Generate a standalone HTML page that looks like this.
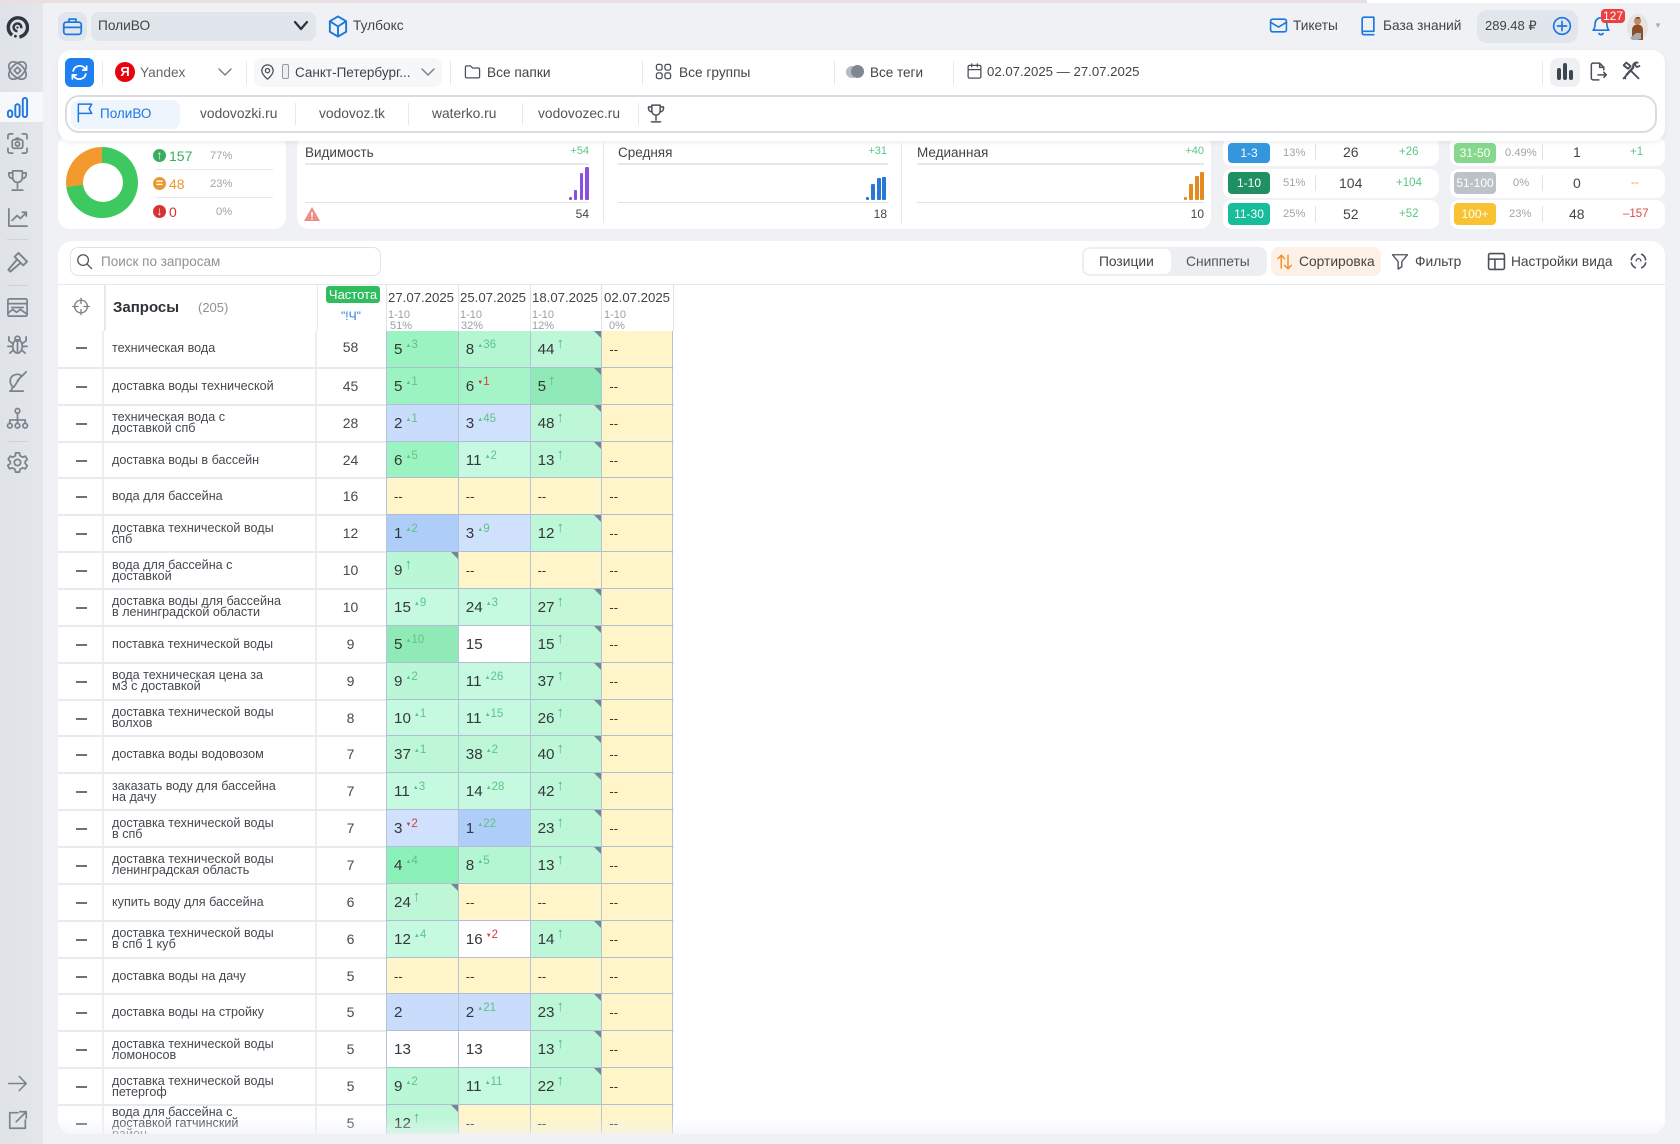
<!DOCTYPE html>
<html lang="ru"><head><meta charset="utf-8"><title>ПолиВО</title>
<style>
*{box-sizing:border-box}
html,body{margin:0;padding:0}
body{width:1680px;height:1144px;position:relative;overflow:hidden;background:#eff1f4;font-family:"Liberation Sans","Noto Sans CJK SC",sans-serif;color:#3c4248}
.a,.t,svg.i{position:absolute}
.t{white-space:nowrap;line-height:1}
svg.i{fill:none;stroke:#7a828c;stroke-width:1.8;stroke-linecap:round;stroke-linejoin:round}
svg.b{stroke:#1c78e0}
svg.d{stroke:#4a5058}
.v{position:absolute;width:1px;background:#e6e9ec}
.card{position:absolute;background:#fff}
.sc{position:absolute;background:#fff;border-radius:9px;height:29px}
.bd{position:absolute;width:42px;border-radius:4px;color:#fff;font-size:12px;text-align:center}
#tb{position:absolute;left:0;top:-1px;width:616px}
.r{height:36.86px;display:flex;position:relative;border-top:2px solid #e8ebee;background:#fff}
.r:first-child{border-top:0}
.x{width:46px;border-right:2px solid #eceef1;position:relative}
.x:after{content:"";position:absolute;left:18px;top:17px;width:11px;height:2px;background:#6b7178}
.q{width:213px;border-right:2px solid #eceef1;padding-left:8px;font-size:12.6px;line-height:11px;color:#444a50;display:flex;align-items:center;overflow:hidden;white-space:nowrap}
.n{width:69px;text-align:center;font-size:14px;color:#444a50;line-height:35px;padding-right:2px}
.c{width:71.8px;flex:none;position:relative;border-left:1px solid #b4c4d8;font-size:15.2px;line-height:38px;padding-left:7px;color:#33383d;margin-top:-2px;border-top:1px solid #aebfd4;height:36.86px;white-space:nowrap}
.r:first-child .c{margin-top:0}
.c:last-child{border-right:1px solid #b4c4d8}
.c sup{font-size:11.5px;position:relative;top:-6px;vertical-align:baseline;line-height:0;color:#5cc585;margin-left:3px}
.c sup b{font-size:6px;font-weight:400;position:relative;top:-1px}
.c sup.m{color:#d83a3a}
.c i{font-style:normal;font-size:15px;position:relative;top:-6px;line-height:0;color:#4cc07a;margin-left:2px}
.k:after{content:"";position:absolute;right:0;top:0;border-style:solid;border-width:0 7px 7px 0;border-color:transparent #6f8a96 transparent transparent}
.y{background:#fff5c9;font-size:13px}
.w{background:#fff}
.b1{background:#aecdf9}.b2{background:#c9dcfb}.b3{background:#cfe1fc}
.g4{background:#8cf1b9}.g5{background:#9af3c0}.gs{background:#90eab8}.g6{background:#a4f4c7}.g8{background:#b4f6d2}.g9{background:#baf7d6}.g1{background:#c5fae0}.g2{background:#bdf7d8}
</style></head><body>

<!-- top strip -->
<div class="a" style="left:0;top:0;width:1367px;height:3px;background:#e9dfe0"></div>
<div class="a" style="left:1367px;top:0;width:313px;height:3px;background:#fff"></div>

<!-- sidebar -->
<div class="a" style="left:0;top:3px;width:43px;height:1141px;background:linear-gradient(90deg,#dfe3e8,#e3e6ea)"></div>
<div class="a" style="left:0;top:92px;width:43px;height:30px;background:#f6f8fa"></div>
<div class="a" style="left:7px;top:239px;width:21px;height:1px;background:#cdd2d8"></div>
<div class="a" style="left:7px;top:285px;width:21px;height:1px;background:#cdd2d8"></div>
<div class="a" style="left:7px;top:441px;width:21px;height:1px;background:#cdd2d8"></div>

<svg class="i" style="left:6px;top:16px;stroke:#2f3740;stroke-width:3.6;stroke-linecap:butt" width="23" height="23" viewBox="0 0 24 24"><path d="M6.500 20A10 10 0 1 1 14 21.800"/><path d="M12 15.800a4 4 0 1 1 3.800-3" stroke-width="2.600"/><circle cx="9.800" cy="21" r="1.500" fill="#2f3740" stroke="none"/><circle cx="12" cy="12" r="1.200" fill="#2f3740" stroke="none"/></svg>
<svg class="i" style="left:6px;top:59px" width="23" height="23" viewBox="0 0 24 24"><ellipse cx="12" cy="12" rx="11" ry="6.500" transform="rotate(45 12 12)"/><ellipse cx="12" cy="12" rx="11" ry="6.500" transform="rotate(-45 12 12)"/><path d="M12 8.500l3.500 3.500-3.500 3.500L8.500 12z"/></svg>
<svg class="i b" style="left:6px;top:96px;stroke-width:2" width="23" height="23" viewBox="0 0 24 24"><rect x="2" y="15" width="4.500" height="7" rx="2.200"/><rect x="9.700" y="8.500" width="4.500" height="13.500" rx="2.200"/><rect x="17.500" y="2" width="4.500" height="20" rx="2.200"/></svg>
<svg class="i" style="left:6px;top:132px" width="23" height="23" viewBox="0 0 24 24"><path d="M2 7V4a2 2 0 0 1 2-2h3M17 2h3a2 2 0 0 1 2 2v3M2 17v3a2 2 0 0 0 2 2h3M17 22h3a2 2 0 0 0 2-2v-3"/><rect x="6.500" y="8" width="11" height="9" rx="2"/><circle cx="12" cy="12.500" r="2.200"/><path d="M10 8l.8-1.500h2.400L14 8"/></svg>
<svg class="i" style="left:6px;top:169px" width="23" height="23" viewBox="0 0 24 24"><path d="M7 2h10v7a5 5 0 0 1-10 0zM7 4H3v2a4 4 0 0 0 4 4M17 4h4v2a4 4 0 0 1-4 4M12 14v6M6.500 22h11"/></svg>
<svg class="i" style="left:6px;top:206px" width="23" height="23" viewBox="0 0 24 24"><path d="M3 3v18h19M6.500 15l5-5 3.500 3 6-6M17 6.500h4.200v4"/></svg>
<svg class="i" style="left:6px;top:251px;stroke-width:2" width="23" height="23" viewBox="0 0 24 24"><path d="M13 2l9 9-4 4-9-9zM11 9.500L2.500 19.500l2 2L14.500 13"/></svg>
<svg class="i" style="left:6px;top:296px" width="23" height="23" viewBox="0 0 24 24"><rect x="2" y="3" width="20" height="18" rx="1.500"/><path d="M2 8h20M6 12h12M2 18l5-4 4 3 4-3 7 5"/></svg>
<svg class="i" style="left:6px;top:333px" width="23" height="23" viewBox="0 0 24 24"><ellipse cx="12" cy="14" rx="5" ry="7"/><circle cx="12" cy="6" r="2.600"/><path d="M7 11L3 8V4M17 11l4-3V4M7 14H2M17 14h5M7.500 18L4 21M16.500 18l3.500 3M12 9v12"/></svg>
<svg class="i" style="left:6px;top:370px" width="23" height="23" viewBox="0 0 24 24"><path d="M4 22h14M8 18c-4-2-5-9-1-12 3-2 7-2 9 0zM12 11L21 2M7 18l-2 4"/></svg>
<svg class="i" style="left:6px;top:407px" width="23" height="23" viewBox="0 0 24 24"><circle cx="12" cy="4" r="2.400"/><circle cx="4" cy="19.500" r="2.400"/><circle cx="12" cy="19.500" r="2.400"/><circle cx="20" cy="19.500" r="2.400"/><path d="M12 6.500V17M4 17v-3.500h16V17"/></svg>
<svg class="i" style="left:6px;top:451px" width="23" height="23" viewBox="0 0 24 24"><circle cx="12" cy="12" r="3.300"/><path d="M10 2h4l.7 3 2.600 1.400 2.900-1 2 3.400-2.200 2.200v2l2.200 2.200-2 3.400-2.900-1-2.600 1.400-.7 3h-4l-.7-3-2.600-1.400-2.900 1-2-3.400L4.500 13v-2L2.300 8.800l2-3.400 2.900 1 2.600-1.400z"/></svg>
<svg class="i" style="left:7px;top:1073px" width="21" height="21" viewBox="0 0 24 24"><path d="M2 12h20M14 4l8 8-8 8"/></svg>
<svg class="i" style="left:7px;top:1109px" width="22" height="22" viewBox="0 0 24 24"><path d="M12 4H3v17h17v-9M14 3h7v7M21 3L10 14"/></svg>

<!-- top bar -->
<div class="a" style="left:58px;top:12px;width:29px;height:29px;background:#e1e6ec;border-radius:8px"></div>
<svg class="i b" style="left:62px;top:16px;stroke-width:2" width="21" height="21" viewBox="0 0 24 24"><rect x="2" y="7" width="20" height="14" rx="3"/><path d="M8 7V3.500h8V7M2 13h20"/></svg>
<div class="a" style="left:91px;top:12px;width:225px;height:29px;background:#e1e6ec;border-radius:8px"></div>
<div class="t" style="left:98px;top:19px;font-size:13.700px;color:#444">ПолиВО</div>
<svg class="i" style="left:293px;top:19px;stroke:#2c3238;stroke-width:2.200" width="16" height="14" viewBox="0 0 16 14"><path d="M2 3l6 7 6-7"/></svg>
<svg class="i b" style="left:328px;top:15px;stroke-width:2" width="20" height="23" viewBox="0 0 20 24"><path d="M10 1.500l8.500 5v11L10 22.500l-8.500-5v-11zM1.500 6.500L10 12l8.500-5.500M10 12v10.500"/></svg>
<div class="t" style="left:353px;top:19px;font-size:13.700px;color:#444">Тулбокс</div>

<svg class="i b" style="left:1269px;top:16px;stroke-width:2" width="19" height="19" viewBox="0 0 24 24"><rect x="2" y="4" width="20" height="16" rx="2.500"/><path d="M2 8l10 6 10-6"/></svg>
<div class="t" style="left:1293px;top:19px;font-size:13.700px;color:#444">Тикеты</div>
<svg class="i b" style="left:1358px;top:15px;stroke-width:2" width="20" height="21" viewBox="0 0 24 24"><path d="M5 19V4a2 2 0 0 1 2-2h12v17H7a2 2 0 0 0 0 4h12"/></svg>
<div class="t" style="left:1383px;top:19px;font-size:13.700px;color:#444">База знаний</div>
<div class="a" style="left:1477px;top:10px;width:101px;height:33px;background:#e1e6ec;border-radius:10px"></div>
<div class="t" style="left:1485px;top:19px;font-size:13px;color:#444">289.48 ₽</div>
<svg class="i b" style="left:1552px;top:16px;stroke-width:2" width="20" height="20" viewBox="0 0 24 24"><circle cx="12" cy="12" r="10"/><path d="M12 6.500v11M6.500 12h11"/></svg>
<svg class="i b" style="left:1591px;top:16px;stroke-width:2" width="20" height="20" viewBox="0 0 24 24"><path d="M12 2a7 7 0 0 0-7 7c0 6-2.500 8-2.500 8h19S19 15 19 9a7 7 0 0 0-7-7zM9.500 21a3 3 0 0 0 5 0"/></svg>
<div class="a" style="left:1601px;top:9px;width:24px;height:14px;background:#ec3f3f;border-radius:4px;color:#fff;font-size:12px;line-height:14px;text-align:center">127</div>
<svg class="a" style="left:1627px;top:14px" width="21" height="26" viewBox="0 0 21 26"><ellipse cx="10.500" cy="13" rx="10.500" ry="13" fill="#e6e4e2"/><circle cx="10.500" cy="7" r="3.600" fill="#c48a62"/><path d="M8 4.500c1-2 5-2 5.500 0z" fill="#5a3a24"/><path d="M5 26V16c0-4 3-5.500 5.500-5.500S16 12 16 16v10z" fill="#8b4f2a"/><path d="M3 24l6-5h5v6l-4 1H5z" fill="#a8acb0"/></svg>
<div class="t" style="left:1654px;top:22px;font-size:8px;color:#a9aeb4">▼</div>

<!-- filter card -->
<div class="card" style="left:58px;top:50px;width:1607px;height:91px;border-radius:13px;box-shadow:0 2px 4px rgba(120,130,140,.12);z-index:3">
<div class="a" style="left:7px;top:8px;width:29px;height:29px;background:#1e80f0;border-radius:6px"></div>
<svg class="i" style="left:12px;top:13px;stroke:#fff;stroke-width:2.200" width="19" height="19" viewBox="0 0 24 24"><path d="M4 10a8.500 8.500 0 0 1 15-3l2 2M21 4v5h-5M20 14a8.500 8.500 0 0 1-15 3l-2-2M3 20v-5h5"/></svg>
<div class="v" style="left:44px;top:11px;height:24px"></div>
<div class="a" style="left:57px;top:12px;width:20px;height:20px;border-radius:50%;background:#e8000d;color:#fff;font-weight:700;font-size:13px;line-height:20px;text-align:center">Я</div>
<div class="t" style="left:82px;top:16px;font-size:13.700px;color:#666">Yandex</div>
<svg class="i" style="left:160px;top:16px;stroke-width:1.500" width="14" height="12" viewBox="0 0 14 12"><path d="M1 3l6 6 6-6"/></svg>
<div class="v" style="left:188px;top:11px;height:24px"></div>
<div class="a" style="left:196px;top:8px;width:188px;height:29px;background:#f5f7f9;border-radius:8px"></div>
<svg class="i d" style="left:201px;top:13px" width="17" height="18" viewBox="0 0 24 24"><path d="M12 2a8 8 0 0 0-8 8c0 6 8 12 8 12s8-6 8-12a8 8 0 0 0-8-8z"/><circle cx="12" cy="10" r="3"/></svg>
<div class="a" style="left:224px;top:14px;width:7px;height:15px;border:1px solid #999;border-radius:2px;background:#eee"></div>
<div class="t" style="left:237px;top:16px;font-size:13.500px;color:#444">Санкт-Петербург...</div>
<svg class="i" style="left:363px;top:16px;stroke-width:1.500" width="14" height="12" viewBox="0 0 14 12"><path d="M1 3l6 6 6-6"/></svg>
<div class="v" style="left:392px;top:11px;height:24px"></div>
<svg class="i d" style="left:406px;top:13px" width="17" height="17" viewBox="0 0 24 24"><path d="M2 6a2 2 0 0 1 2-2h5l3 3h8a2 2 0 0 1 2 2v10a2 2 0 0 1-2 2H4a2 2 0 0 1-2-2z"/></svg>
<div class="t" style="left:429px;top:16px;font-size:13.700px;color:#444">Все папки</div>
<div class="v" style="left:584px;top:11px;height:24px"></div>
<svg class="i d" style="left:597px;top:13px" width="17" height="17" viewBox="0 0 24 24"><rect x="2" y="2" width="8" height="8" rx="2.500"/><rect x="14" y="2" width="8" height="8" rx="2.500"/><rect x="2" y="14" width="8" height="8" rx="2.500"/><rect x="14" y="14" width="8" height="8" rx="2.500"/></svg>
<div class="t" style="left:621px;top:16px;font-size:13.700px;color:#444">Все группы</div>
<div class="v" style="left:776px;top:11px;height:24px"></div>
<div class="a" style="left:788px;top:16px;width:12px;height:12px;border-radius:50%;background:#b6bcc4"></div>
<div class="a" style="left:793px;top:15px;width:13px;height:13px;border-radius:50%;background:#7e8792"></div>
<div class="t" style="left:812px;top:16px;font-size:13.500px;color:#444">Все теги</div>
<div class="v" style="left:895px;top:11px;height:24px"></div>
<svg class="i d" style="left:908px;top:12px" width="17" height="18" viewBox="0 0 24 24"><rect x="3" y="4" width="18" height="18" rx="2"/><path d="M3 10h18M8 2v4M16 2v4"/></svg>
<div class="t" style="left:929px;top:15px;font-size:13.200px;color:#444">02.07.2025 — 27.07.2025</div>
<div class="v" style="left:1484px;top:11px;height:24px"></div>
<div class="a" style="left:1492px;top:8px;width:30px;height:29px;background:#eef0f3;border-radius:8px"></div>
<div class="a" style="left:1499px;top:18px;width:4px;height:12px;background:#3e4650;border-radius:2px"></div>
<div class="a" style="left:1505px;top:13px;width:4px;height:17px;background:#3e4650;border-radius:2px"></div>
<div class="a" style="left:1511px;top:20px;width:4px;height:10px;background:#3e4650;border-radius:2px"></div>
<svg class="i d" style="left:1530px;top:11px" width="20" height="21" viewBox="0 0 24 24"><path d="M13 22H6a2 2 0 0 1-2-2V4a2 2 0 0 1 2-2h8l5 5v3M14 2v5h5M12 16h10M19 13l3 3-3 3"/></svg>
<svg class="i d" style="left:1563px;top:10px;stroke-width:2.200" width="21" height="21" viewBox="0 0 24 24"><path d="M3 21L14 9M6 3l-3 3 5 4 3-3zM4 20l1 1M19 3a4 4 0 0 0-5 5L6 17M21 7l-3 1-2-2 1-3M12 13l8 8"/></svg>

<!-- tabs -->
<div class="a" style="left:7px;top:45px;width:1592px;height:38px;border:2px solid #d9dde1;border-radius:14px"></div>
<div class="a" style="left:13px;top:50px;width:109px;height:29px;background:#eff5fd;border-radius:8px"></div>
<svg class="i b" style="left:17px;top:52px" width="20" height="21" viewBox="0 0 24 24"><path d="M4 23V2h16l-3 5.500 3 5.500H4"/></svg>
<div class="t" style="left:42px;top:57px;font-size:13.500px;color:#1c78e0">ПолиВО</div>
<div class="t" style="left:142px;top:57px;font-size:13.800px;color:#555">vodovozki.ru</div>
<div class="v" style="left:237px;top:53px;height:22px"></div>
<div class="t" style="left:261px;top:57px;font-size:13.800px;color:#555">vodovoz.tk</div>
<div class="v" style="left:350px;top:53px;height:22px"></div>
<div class="t" style="left:374px;top:57px;font-size:13.800px;color:#555">waterko.ru</div>
<div class="v" style="left:464px;top:53px;height:22px"></div>
<div class="t" style="left:480px;top:57px;font-size:13.800px;color:#555">vodovozec.ru</div>
<div class="v" style="left:580px;top:53px;height:22px"></div>
<svg class="i d" style="left:588px;top:53px" width="20" height="21" viewBox="0 0 24 24"><path d="M7 2h10v7a5 5 0 0 1-10 0zM7 4H3v2a4 4 0 0 0 4 4M17 4h4v2a4 4 0 0 1-4 4M12 14v6M6.500 22h11"/></svg>
</div>

<!-- stat card 1 -->
<div class="card" style="left:58px;top:135px;width:228px;height:94px;border-radius:12px"></div>
<div class="a" style="left:66px;top:147px;width:72px;height:71px;border-radius:50%;background:conic-gradient(#3dc95f 0 73%,#f39a2f 73% 100%)"></div>
<div class="a" style="left:83px;top:163px;width:40px;height:39px;border-radius:50%;background:#fff"></div>
<div class="a" style="left:153px;top:149px;width:13px;height:13px;border-radius:50%;background:#3aae5c;color:#fff;font-size:12px;line-height:13px;text-align:center;font-weight:700">↑</div>
<div class="t" style="left:169px;top:149px;font-size:14px;color:#3aae5c">157</div>
<div class="t" style="left:210px;top:151px;font-size:11.200px;color:#a0a5aa">77%</div>
<div class="a" style="left:156px;top:169px;width:117px;height:1px;background:#e6e8ea"></div>
<div class="a" style="left:153px;top:177px;width:13px;height:13px;border-radius:50%;background:#e89a30;color:#fff;font-size:12px;line-height:12px;text-align:center;font-weight:700">=</div>
<div class="t" style="left:169px;top:177px;font-size:14px;color:#e89a30">48</div>
<div class="t" style="left:210px;top:179px;font-size:11.200px;color:#a0a5aa">23%</div>
<div class="a" style="left:156px;top:197px;width:117px;height:1px;background:#e6e8ea"></div>
<div class="a" style="left:153px;top:205px;width:13px;height:13px;border-radius:50%;background:#d83232;color:#fff;font-size:12px;line-height:13px;text-align:center;font-weight:700">↓</div>
<div class="t" style="left:169px;top:205px;font-size:14px;color:#d83232">0</div>
<div class="t" style="left:216px;top:207px;font-size:11.200px;color:#a0a5aa">0%</div>

<!-- stat card 2 -->
<div class="card" style="left:297px;top:135px;width:914px;height:94px;border-radius:12px"></div>
<div class="t" style="left:305px;top:146px;font-size:13.500px;color:#444">Видимость</div>
<div class="t" style="right:1091px;top:146px;font-size:11px;color:#5cc585">+54</div>
<div class="a" style="left:305px;top:163px;width:284px;height:2px;background:#e6e8ea"></div>
<div class="a" style="left:305px;top:202px;width:284px;height:1px;background:#dfe2e5"></div>
<div class="a" style="left:569px;top:197px;width:3px;height:3px;background:#8a4fe0;border-radius:1px"></div>
<div class="a" style="left:574px;top:190px;width:3px;height:10px;background:#8a4fe0;border-radius:1px"></div>
<div class="a" style="left:580px;top:173px;width:3px;height:27px;background:#8a4fe0;border-radius:1px"></div>
<div class="a" style="left:585px;top:167px;width:4px;height:33px;background:#8a4fe0;border-radius:1px"></div>
<svg class="a" style="left:304px;top:207px" width="16" height="14" viewBox="0 0 16 14"><path d="M8 0l8 14H0z" fill="#ee8d86"/><path d="M8 5v5M8 11v1.500" stroke="#fff" stroke-width="1.500"/></svg>
<div class="t" style="right:1091px;top:208px;font-size:12px;color:#444">54</div>
<div class="v" style="left:603px;top:143px;height:80px"></div>

<div class="t" style="left:618px;top:146px;font-size:13.500px;color:#444">Средняя</div>
<div class="t" style="right:793px;top:146px;font-size:11px;color:#5cc585">+31</div>
<div class="a" style="left:618px;top:163px;width:270px;height:2px;background:#e6e8ea"></div>
<div class="a" style="left:618px;top:202px;width:270px;height:1px;background:#dfe2e5"></div>
<div class="a" style="left:866px;top:197px;width:3px;height:3px;background:#2878d8;border-radius:1px"></div>
<div class="a" style="left:871px;top:184px;width:4px;height:16px;background:#2878d8;border-radius:1px"></div>
<div class="a" style="left:877px;top:178px;width:4px;height:22px;background:#2878d8;border-radius:1px"></div>
<div class="a" style="left:882px;top:177px;width:4px;height:23px;background:#2878d8;border-radius:1px"></div>
<div class="t" style="right:793px;top:208px;font-size:12px;color:#444">18</div>
<div class="v" style="left:901px;top:143px;height:80px"></div>

<div class="t" style="left:917px;top:146px;font-size:13.500px;color:#444">Медианная</div>
<div class="t" style="right:476px;top:146px;font-size:11px;color:#5cc585">+40</div>
<div class="a" style="left:917px;top:163px;width:287px;height:2px;background:#e6e8ea"></div>
<div class="a" style="left:917px;top:202px;width:287px;height:1px;background:#dfe2e5"></div>
<div class="a" style="left:1184px;top:197px;width:3px;height:3px;background:#e58a1f;border-radius:1px"></div>
<div class="a" style="left:1189px;top:184px;width:4px;height:16px;background:#e58a1f;border-radius:1px"></div>
<div class="a" style="left:1195px;top:176px;width:4px;height:24px;background:#e58a1f;border-radius:1px"></div>
<div class="a" style="left:1200px;top:172px;width:4px;height:28px;background:#e58a1f;border-radius:1px"></div>
<div class="t" style="right:476px;top:208px;font-size:12px;color:#444">10</div>

<!-- range cards -->
<div class="sc" style="left:1223px;top:137px;width:216px"></div>
<div class="sc" style="left:1223px;top:169px;width:216px"></div>
<div class="sc" style="left:1223px;top:200px;width:216px"></div>
<div class="sc" style="left:1450px;top:137px;width:215px"></div>
<div class="sc" style="left:1450px;top:169px;width:215px"></div>
<div class="sc" style="left:1450px;top:200px;width:215px"></div>

<div class="bd" style="left:1228px;top:143px;height:20px;line-height:20px;background:#3497dd">1-3</div>
<div class="bd" style="left:1228px;top:172px;height:22px;line-height:22px;background:#1f8f64">1-10</div>
<div class="bd" style="left:1228px;top:203px;height:22px;line-height:22px;background:#17bd9b">11-30</div>
<div class="bd" style="left:1454px;top:143px;height:20px;line-height:20px;background:#86d88c">31-50</div>
<div class="bd" style="left:1454px;top:172px;height:22px;line-height:22px;background:#bcc3c6">51-100</div>
<div class="bd" style="left:1454px;top:203px;height:22px;line-height:22px;background:#f9c232">100+</div>

<div class="t" style="left:1283px;top:148px;font-size:11.200px;color:#a0a5aa">13%</div>
<div class="t" style="left:1283px;top:178px;font-size:11.200px;color:#a0a5aa">51%</div>
<div class="t" style="left:1283px;top:209px;font-size:11.200px;color:#a0a5aa">25%</div>
<div class="v" style="left:1315px;top:144px;height:16px;background:#dfe2e5"></div>
<div class="v" style="left:1315px;top:175px;height:16px;background:#dfe2e5"></div>
<div class="v" style="left:1315px;top:206px;height:16px;background:#dfe2e5"></div>
<div class="t" style="left:1343px;top:145px;font-size:14px;color:#444">26</div>
<div class="t" style="left:1339px;top:176px;font-size:14px;color:#444">104</div>
<div class="t" style="left:1343px;top:207px;font-size:14px;color:#444">52</div>
<div class="t" style="left:1399px;top:147px;font-size:11.500px;color:#5cc585">+26</div>
<div class="t" style="left:1396px;top:178px;font-size:11.500px;color:#5cc585">+104</div>
<div class="t" style="left:1399px;top:209px;font-size:11.500px;color:#5cc585">+52</div>

<div class="t" style="left:1505px;top:148px;font-size:11.200px;color:#a0a5aa">0.49%</div>
<div class="t" style="left:1513px;top:178px;font-size:11.200px;color:#a0a5aa">0%</div>
<div class="t" style="left:1509px;top:209px;font-size:11.200px;color:#a0a5aa">23%</div>
<div class="v" style="left:1542px;top:144px;height:16px;background:#dfe2e5"></div>
<div class="v" style="left:1542px;top:175px;height:16px;background:#dfe2e5"></div>
<div class="v" style="left:1542px;top:206px;height:16px;background:#dfe2e5"></div>
<div class="t" style="left:1573px;top:145px;font-size:14px;color:#444">1</div>
<div class="t" style="left:1573px;top:176px;font-size:14px;color:#444">0</div>
<div class="t" style="left:1569px;top:207px;font-size:14px;color:#444">48</div>
<div class="t" style="left:1630px;top:147px;font-size:11.500px;color:#5cc585">+1</div>
<div class="t" style="left:1631px;top:178px;font-size:11.500px;color:#e8a33a">--</div>
<div class="t" style="left:1623px;top:209px;font-size:11.500px;color:#d84a4a">–157</div>

<!-- main card -->
<div class="card" style="left:58px;top:241px;width:1607px;height:893px;border-radius:14px;overflow:hidden">
<div class="a" style="left:0;top:43px;width:1607px;height:1px;background:#e6e9ec"></div>
</div>
<div class="a" style="left:70px;top:247px;width:311px;height:29px;border:1px solid #dfe3e7;border-radius:8px;background:#fff"></div>
<svg class="i d" style="left:76px;top:253px" width="17" height="17" viewBox="0 0 24 24"><circle cx="10" cy="10" r="7.500"/><path d="M16 16l6 6"/></svg>
<div class="t" style="left:101px;top:255px;font-size:13.500px;color:#8d9298">Поиск по запросам</div>

<div class="a" style="left:1082px;top:247px;width:185px;height:29px;background:#eceef1;border-radius:8px"></div>
<div class="a" style="left:1084px;top:249px;width:87px;height:25px;background:#fff;border-radius:6px"></div>
<div class="t" style="left:1099px;top:255px;font-size:13.800px;color:#444">Позиции</div>
<div class="t" style="left:1186px;top:255px;font-size:13.800px;color:#555">Сниппеты</div>
<div class="a" style="left:1271px;top:247px;width:110px;height:29px;background:#fdf0e6;border-radius:8px"></div>
<svg class="i" style="left:1276px;top:252px;stroke:#f0932b;stroke-width:2" width="18" height="20" viewBox="0 0 24 24"><path d="M7 20V3M2.500 7.500L7 3l4.500 4.500M16 3v18M11.500 16.500L16 21l4.500-4.500"/></svg>
<div class="t" style="left:1299px;top:255px;font-size:13.800px;color:#444">Сортировка</div>
<svg class="i d" style="left:1391px;top:252px" width="18" height="19" viewBox="0 0 24 24"><path d="M2 3h20l-7.500 9v7l-5 3V12z"/></svg>
<div class="t" style="left:1415px;top:255px;font-size:13.800px;color:#444">Фильтр</div>
<svg class="i d" style="left:1487px;top:252px;stroke-width:2" width="19" height="19" viewBox="0 0 24 24"><rect x="2" y="2" width="20" height="20" rx="2"/><path d="M2 9h20M10 9v13"/></svg>
<div class="t" style="left:1511px;top:255px;font-size:13.700px;color:#444">Настройки вида</div>
<svg class="i d" style="left:1629px;top:251px;stroke-width:2" width="19" height="20" viewBox="0 0 24 24"><path d="M8 3.500a9 9 0 0 0-5 7M3 14.500a9 9 0 0 0 5 6M16 20.500a9 9 0 0 0 5-6M16 3.500a9 9 0 0 1 5 7"/><path d="M9 12a3 3 0 0 1 6 0" stroke-width="1.600"/></svg>

<!-- table header -->
<div class="a" style="left:104px;top:285px;width:2px;height:46px;background:#e8ebee"></div>
<div class="a" style="left:317px;top:285px;width:1px;height:46px;background:#e8ebee"></div>
<div class="a" style="left:386px;top:285px;width:1px;height:46px;background:#dfe3e8"></div>
<div class="a" style="left:458px;top:285px;width:1px;height:46px;background:#dfe3e8"></div>
<div class="a" style="left:530px;top:285px;width:1px;height:46px;background:#dfe3e8"></div>
<div class="a" style="left:601px;top:285px;width:1px;height:46px;background:#dfe3e8"></div>
<div class="a" style="left:673px;top:285px;width:1px;height:46px;background:#dfe3e8"></div>
<svg class="i" style="left:72px;top:297px" width="18" height="19" viewBox="0 0 24 24"><circle cx="12" cy="12" r="8.500"/><path d="M12 1v7M12 16v7M1 12h7M16 12h7"/></svg>
<div class="t" style="left:113px;top:300px;font-size:15px;font-weight:700;color:#2e3338">Запросы</div>
<div class="t" style="left:198px;top:301px;font-size:13px;color:#8d9298">(205)</div>
<div class="a" style="left:326px;top:286px;width:54px;height:17px;background:#2fbd60;border-radius:3px;color:#fff;font-size:13px;line-height:17px;text-align:center">Частота</div>
<div class="t" style="left:341px;top:310px;font-size:12px;color:#2a80d8">"!Ч"</div>
<div class="t" style="left:388px;top:291px;font-size:13.200px;color:#444">27.07.2025</div>
<div class="t" style="left:460px;top:291px;font-size:13.200px;color:#444">25.07.2025</div>
<div class="t" style="left:532px;top:291px;font-size:13.200px;color:#444">18.07.2025</div>
<div class="t" style="left:604px;top:291px;font-size:13.200px;color:#444">02.07.2025</div>
<div class="t" style="left:388px;top:310px;font-size:11px;color:#9aa0a6">1-10</div>
<div class="t" style="left:460px;top:310px;font-size:11px;color:#9aa0a6">1-10</div>
<div class="t" style="left:532px;top:310px;font-size:11px;color:#9aa0a6">1-10</div>
<div class="t" style="left:604px;top:310px;font-size:11px;color:#9aa0a6">1-10</div>
<div class="a" style="left:390px;top:321px;width:270px;height:10px;overflow:hidden;font-size:11px;line-height:1;color:#9aa0a6">
<span class="t" style="left:0;top:0">51%</span><span class="t" style="left:71px;top:0">32%</span><span class="t" style="left:142px;top:0">12%</span><span class="t" style="left:219px;top:0">0%</span></div>

<!-- table body -->
<div class="a" style="left:58px;top:331px;width:617px;height:803px;overflow:hidden;border-radius:0 0 0 14px">
<div id="tb">
<div class="r"><div class="x"></div><div class="q">техническая вода</div><div class="n">58</div><div class="c g5">5<sup><b>▲</b>3</sup></div><div class="c g8">8<sup><b>▲</b>36</sup></div><div class="c g2 k">44<i>↑</i></div><div class="c y">--</div></div>
<div class="r"><div class="x"></div><div class="q">доставка воды технической</div><div class="n">45</div><div class="c g5">5<sup><b>▲</b>1</sup></div><div class="c g6">6<sup class="m"><b>▼</b>1</sup></div><div class="c gs k">5<i>↑</i></div><div class="c y">--</div></div>
<div class="r"><div class="x"></div><div class="q">техническая вода с<br>доставкой спб</div><div class="n">28</div><div class="c b2">2<sup><b>▲</b>1</sup></div><div class="c b3">3<sup><b>▲</b>45</sup></div><div class="c g2 k">48<i>↑</i></div><div class="c y">--</div></div>
<div class="r"><div class="x"></div><div class="q">доставка воды в бассейн</div><div class="n">24</div><div class="c g5">6<sup><b>▲</b>5</sup></div><div class="c g1">11<sup><b>▲</b>2</sup></div><div class="c g2 k">13<i>↑</i></div><div class="c y">--</div></div>
<div class="r"><div class="x"></div><div class="q">вода для бассейна</div><div class="n">16</div><div class="c y">--</div><div class="c y">--</div><div class="c y">--</div><div class="c y">--</div></div>
<div class="r"><div class="x"></div><div class="q">доставка технической воды<br>спб</div><div class="n">12</div><div class="c b1">1<sup><b>▲</b>2</sup></div><div class="c b3">3<sup><b>▲</b>9</sup></div><div class="c g2 k">12<i>↑</i></div><div class="c y">--</div></div>
<div class="r"><div class="x"></div><div class="q">вода для бассейна с<br>доставкой</div><div class="n">10</div><div class="c g9 k">9<i>↑</i></div><div class="c y">--</div><div class="c y">--</div><div class="c y">--</div></div>
<div class="r"><div class="x"></div><div class="q">доставка воды для бассейна<br>в ленинградской области</div><div class="n">10</div><div class="c g1">15<sup><b>▲</b>9</sup></div><div class="c g1">24<sup><b>▲</b>3</sup></div><div class="c g2 k">27<i>↑</i></div><div class="c y">--</div></div>
<div class="r"><div class="x"></div><div class="q">поставка технической воды</div><div class="n">9</div><div class="c gs">5<sup><b>▲</b>10</sup></div><div class="c w">15</div><div class="c g2 k">15<i>↑</i></div><div class="c y">--</div></div>
<div class="r"><div class="x"></div><div class="q">вода техническая цена за<br>м3 с доставкой</div><div class="n">9</div><div class="c g9">9<sup><b>▲</b>2</sup></div><div class="c g1">11<sup><b>▲</b>26</sup></div><div class="c g2 k">37<i>↑</i></div><div class="c y">--</div></div>
<div class="r"><div class="x"></div><div class="q">доставка технической воды<br>волхов</div><div class="n">8</div><div class="c g1">10<sup><b>▲</b>1</sup></div><div class="c g1">11<sup><b>▲</b>15</sup></div><div class="c g2 k">26<i>↑</i></div><div class="c y">--</div></div>
<div class="r"><div class="x"></div><div class="q">доставка воды водовозом</div><div class="n">7</div><div class="c g2">37<sup><b>▲</b>1</sup></div><div class="c g2">38<sup><b>▲</b>2</sup></div><div class="c g2 k">40<i>↑</i></div><div class="c y">--</div></div>
<div class="r"><div class="x"></div><div class="q">заказать воду для бассейна<br>на дачу</div><div class="n">7</div><div class="c g1">11<sup><b>▲</b>3</sup></div><div class="c g1">14<sup><b>▲</b>28</sup></div><div class="c g2 k">42<i>↑</i></div><div class="c y">--</div></div>
<div class="r"><div class="x"></div><div class="q">доставка технической воды<br>в спб</div><div class="n">7</div><div class="c b3">3<sup class="m"><b>▼</b>2</sup></div><div class="c b1">1<sup><b>▲</b>22</sup></div><div class="c g2 k">23<i>↑</i></div><div class="c y">--</div></div>
<div class="r"><div class="x"></div><div class="q">доставка технической воды<br>ленинградская область</div><div class="n">7</div><div class="c g4">4<sup><b>▲</b>4</sup></div><div class="c g8">8<sup><b>▲</b>5</sup></div><div class="c g2 k">13<i>↑</i></div><div class="c y">--</div></div>
<div class="r"><div class="x"></div><div class="q">купить воду для бассейна</div><div class="n">6</div><div class="c g2 k">24<i>↑</i></div><div class="c y">--</div><div class="c y">--</div><div class="c y">--</div></div>
<div class="r"><div class="x"></div><div class="q">доставка технической воды<br>в спб 1 куб</div><div class="n">6</div><div class="c g1">12<sup><b>▲</b>4</sup></div><div class="c w">16<sup class="m"><b>▼</b>2</sup></div><div class="c g2 k">14<i>↑</i></div><div class="c y">--</div></div>
<div class="r"><div class="x"></div><div class="q">доставка воды на дачу</div><div class="n">5</div><div class="c y">--</div><div class="c y">--</div><div class="c y">--</div><div class="c y">--</div></div>
<div class="r"><div class="x"></div><div class="q">доставка воды на стройку</div><div class="n">5</div><div class="c b2">2</div><div class="c b2">2<sup><b>▲</b>21</sup></div><div class="c g2 k">23<i>↑</i></div><div class="c y">--</div></div>
<div class="r"><div class="x"></div><div class="q">доставка технической воды<br>ломоносов</div><div class="n">5</div><div class="c w">13</div><div class="c w">13</div><div class="c g2 k">13<i>↑</i></div><div class="c y">--</div></div>
<div class="r"><div class="x"></div><div class="q">доставка технической воды<br>петергоф</div><div class="n">5</div><div class="c g9">9<sup><b>▲</b>2</sup></div><div class="c g1">11<sup><b>▲</b>11</sup></div><div class="c g2 k">22<i>↑</i></div><div class="c y">--</div></div>
<div class="r"><div class="x"></div><div class="q">вода для бассейна с<br>доставкой гатчинский<br>район</div><div class="n">5</div><div class="c g2 k">12<i>↑</i></div><div class="c y">--</div><div class="c y">--</div><div class="c y">--</div></div>
</div>
</div>
<div class="a" style="left:58px;top:1118px;width:1607px;height:16px;background:linear-gradient(180deg,rgba(255,255,255,0),rgba(239,241,244,.6));border-radius:0 0 14px 14px"></div>
</body></html>
